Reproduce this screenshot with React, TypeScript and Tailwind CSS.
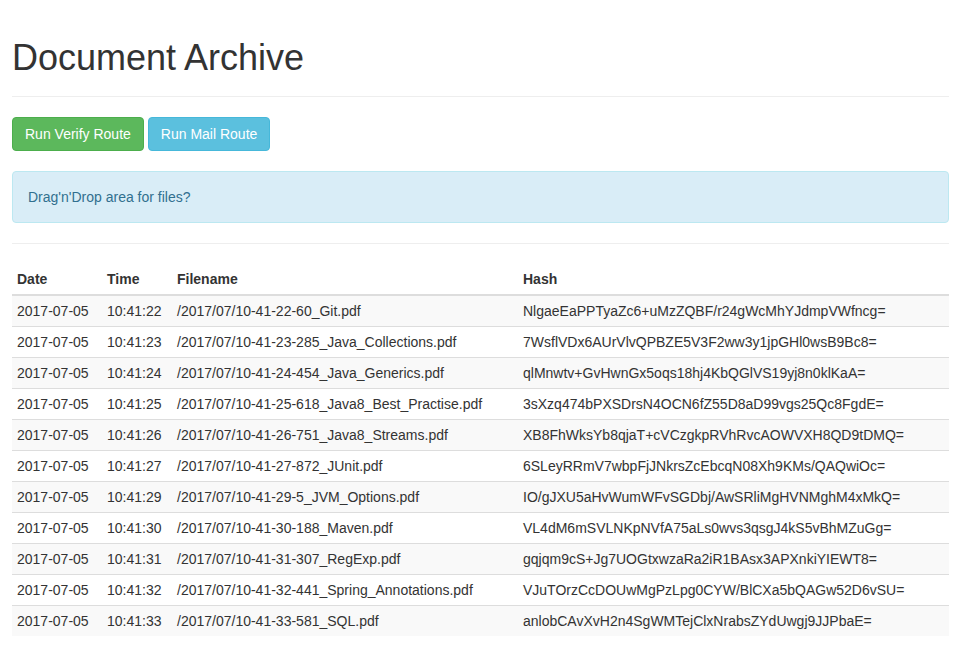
import * as React from "react";

const files = [
  ["10:41:22", "/2017/07/10-41-22-60_Git.pdf", "NlgaeEaPPTyaZc6+uMzZQBF/r24gWcMhYJdmpVWfncg="],
  ["10:41:23", "/2017/07/10-41-23-285_Java_Collections.pdf", "7WsflVDx6AUrVlvQPBZE5V3F2ww3y1jpGHl0wsB9Bc8="],
  ["10:41:24", "/2017/07/10-41-24-454_Java_Generics.pdf", "qlMnwtv+GvHwnGx5oqs18hj4KbQGlVS19yj8n0klKaA="],
  ["10:41:25", "/2017/07/10-41-25-618_Java8_Best_Practise.pdf", "3sXzq474bPXSDrsN4OCN6fZ55D8aD99vgs25Qc8FgdE="],
  ["10:41:26", "/2017/07/10-41-26-751_Java8_Streams.pdf", "XB8FhWksYb8qjaT+cVCzgkpRVhRvcAOWVXH8QD9tDMQ="],
  ["10:41:27", "/2017/07/10-41-27-872_JUnit.pdf", "6SLeyRRmV7wbpFjJNkrsZcEbcqN08Xh9KMs/QAQwiOc="],
  ["10:41:29", "/2017/07/10-41-29-5_JVM_Options.pdf", "IO/gJXU5aHvWumWFvSGDbj/AwSRliMgHVNMghM4xMkQ="],
  ["10:41:30", "/2017/07/10-41-30-188_Maven.pdf", "VL4dM6mSVLNKpNVfA75aLs0wvs3qsgJ4kS5vBhMZuGg="],
  ["10:41:31", "/2017/07/10-41-31-307_RegExp.pdf", "gqjqm9cS+Jg7UOGtxwzaRa2iR1BAsx3APXnkiYIEWT8="],
  ["10:41:32", "/2017/07/10-41-32-441_Spring_Annotations.pdf", "VJuTOrzCcDOUwMgPzLpg0CYW/BlCXa5bQAGw52D6vSU="],
  ["10:41:33", "/2017/07/10-41-33-581_SQL.pdf", "anlobCAvXvH2n4SgWMTejClxNrabsZYdUwgj9JJPbaE="],
];

export default function App() {
  return (
    <div className="min-h-screen bg-white px-[12px] pt-[38px] text-[14px] leading-[20px] text-[#333] font-['Liberation_Sans',Arial,sans-serif]">
      <h1 className="border-b border-[#eee] pb-[18px] text-[36px] leading-[40px] font-medium">
        Document Archive
      </h1>

      <div className="mt-[20px] flex gap-[4px]">
        <button className="h-[34px] rounded-[4px] border border-[#4cae4c] bg-[#5cb85c] px-[12px] text-white">
          Run Verify Route
        </button>
        <button className="h-[34px] rounded-[4px] border border-[#46b8da] bg-[#5bc0de] px-[12px] text-white">
          Run Mail Route
        </button>
      </div>

      <div className="mt-[20px] rounded-[4px] border border-[#bce8f1] bg-[#d9edf7] p-[15px] text-[#31708f]">
        Drag'n'Drop area for files?
      </div>

      <hr className="mt-[20px] border-t border-[#eee]" />

      <table className="mt-[20px] w-full border-collapse text-left">
        <thead>
          <tr>
            <th className="w-[90px] border-b-2 border-[#ddd] p-[5px] font-bold">Date</th>
            <th className="w-[70px] border-b-2 border-[#ddd] p-[5px] font-bold">Time</th>
            <th className="w-[346px] border-b-2 border-[#ddd] p-[5px] font-bold">Filename</th>
            <th className="border-b-2 border-[#ddd] p-[5px] font-bold">Hash</th>
          </tr>
        </thead>
        <tbody>
          {files.map(([time, name, hash], i) => (
            <tr key={name} className={i % 2 === 0 ? "bg-[#f9f9f9]" : ""}>
              <td className="border-t border-[#ddd] p-[5px]">2017-07-05</td>
              <td className="border-t border-[#ddd] p-[5px]">{time}</td>
              <td className="border-t border-[#ddd] p-[5px]">{name}</td>
              <td className="border-t border-[#ddd] p-[5px]">{hash}</td>
            </tr>
          ))}
        </tbody>
      </table>
    </div>
  );
}
